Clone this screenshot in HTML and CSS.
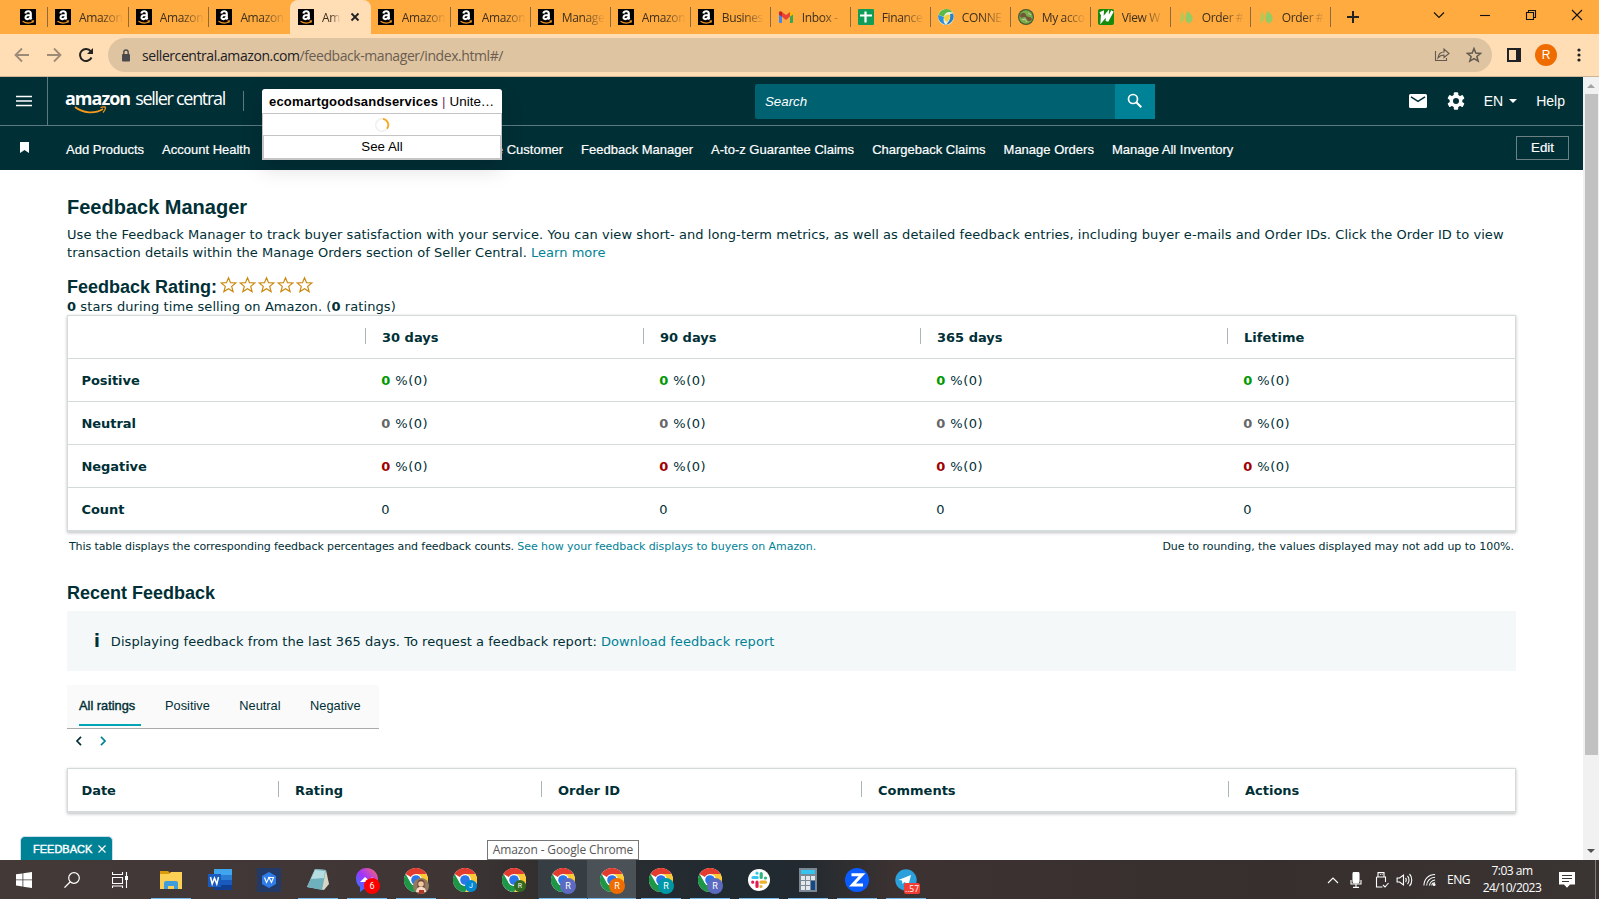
FILE: index.html
```
<!DOCTYPE html>
<html lang="en">
<head>
<meta charset="utf-8">
<title>Amazon</title>
<link rel="stylesheet" href="styles.css">
</head>
<body>
<svg width="0" height="0" class="defs">
  <defs>
    <symbol id="amz" viewBox="0 0 16 16"><rect width="16" height="16" fill="#000"/><path d="M5.300 4.600C5.700 2.900 7 2.300 8.300 2.300c1.700 0 2.500.9 2.500 2.500v4c0 .6.300 1 .7 1.500M10.500 6c-3.300 0-5 .7-5 2.400 0 2.500 4 2.400 5-.6" fill="none" stroke="#fff" stroke-width="2.100"/><path d="M2.500 12.200c3.500 2.300 7.500 2.300 10.500.6M11.500 12l2-.1-.6 1.800" fill="none" stroke="#f7961d" stroke-width="1.100"/></symbol>
    <symbol id="leaf" viewBox="0 0 16 16"><path d="M3 2c5 4 4 9-.5 12.500C1.500 11 4 7 3 2z" fill="#b3c855"/><path d="M9.500 2c6 4 7 10 1.500 12.500-5-2-4-8-1.500-12.500z" fill="#93cb66"/></symbol>
    <symbol id="chrome" viewBox="0 0 24 24"><circle cx="12" cy="12" r="12" fill="#fff"/><path d="M12 12L1.600 6A12 12 0 0 1 22.400 6H12z" fill="#e33b2e"/><path d="M12 6h10.400A12 12 0 0 1 12 24l5.200-9z" fill="#fcc934"/><path d="M1.600 6l5.200 9L12 18l5.200-3L12 24A12 12 0 0 1 1.600 6z" fill="#1e9647"/><circle cx="12" cy="12" r="6" fill="#fff"/><circle cx="12" cy="12" r="4.800" fill="#2b76e8"/></symbol>
    <symbol id="star" viewBox="0 0 19 18"><path d="M8.500 1.800l2 4.900 5.300.3-4.100 3.400 1.400 5.200-4.600-2.900-4.600 2.900 1.400-5.200L1.200 7l5.300-.3z" fill="#fff" stroke="#cc8a12" stroke-width="1.200"/></symbol>
  </defs>
</svg>

<div class="tabstrip">
  <div class="tab pinned"><svg class="fav"><use href="#amz"/></svg></div>
  <div class="tab wide"><svg class="fav"><use href="#amz"/></svg><span>Amazon</span></div>
  <div class="tab wide"><svg class="fav"><use href="#amz"/></svg><span>Amazon</span></div>
  <div class="tab wide last"><svg class="fav"><use href="#amz"/></svg><span>Amazon</span></div>
  <div class="tab active"><svg class="fav"><use href="#amz"/></svg><span>Am</span><svg class="close" viewBox="0 0 10 10"><path d="M1.500 1.500l7 7m0-7l-7 7" stroke="#222" stroke-width="1.800"/></svg></div>
  <div class="tab"><svg class="fav"><use href="#amz"/></svg><span>Amazon</span></div>
  <div class="tab"><svg class="fav"><use href="#amz"/></svg><span>Amazon</span></div>
  <div class="tab"><svg class="fav"><use href="#amz"/></svg><span>Manage</span></div>
  <div class="tab"><svg class="fav"><use href="#amz"/></svg><span>Amazon</span></div>
  <div class="tab"><svg class="fav"><use href="#amz"/></svg><span>Busines</span></div>
  <div class="tab"><svg class="fav" viewBox="0 0 16 16"><path d="M1 4l3 2v8H2a1 1 0 0 1-1-1z" fill="#4285f4"/><path d="M12 6l3-2v9a1 1 0 0 1-1 1h-2z" fill="#34a853"/><path d="M4 6V3l4 3 4-3v4.500L8 11 4 7.800z" fill="#ea4335"/><path d="M1 4c0-2 2-2 3-1v4.800L1 5.500z" fill="#c5221f"/><path d="M15 4c0-2-2-2-3-1v4.800l3-2.300z" fill="#fbbc04"/></svg><span>Inbox -</span></div>
  <div class="tab"><svg class="fav" viewBox="0 0 16 16"><rect width="16" height="16" rx="1" fill="#0f9d58"/><path d="M2 6.500h12M7.500 2.500v11" stroke="#fff" stroke-width="2.200"/></svg><span>Finance</span></div>
  <div class="tab"><svg class="fav" viewBox="0 0 16 16"><circle cx="8" cy="8" r="8" fill="#e9f0d8"/><path d="M.5 6a7.800 7.800 0 0 1 14-2.500c-4-1.500-8 0-8.500 4z" fill="#5cb947"/><path d="M.3 6c-1 5 3 9 7.700 10-2.500-2-3-5-2-8z" fill="#2d8fd5"/><path d="M15 4.500c2 5-1 10-7 11.500 3-4 5-6 4-11z" fill="#2a7fca"/><path d="M6 8c2-3 5-3 6-2 0 3-1 5-3 7-2-1-3-3-3-5z" fill="#f6cf37"/></svg><span>CONNE</span></div>
  <div class="tab"><svg class="fav" viewBox="0 0 16 16"><circle cx="8" cy="8" r="8" fill="#465832"/><circle cx="8" cy="8" r="6.800" fill="#79ad48"/><path d="M2 7c1-4 5-4 6-1s5 1 6 4c-2 4-5 2-6-1s-5 2-6-2z" fill="#72553d"/><path d="M4 11l3-1 2 3M10 4l3 2" fill="none" stroke="#d1c5a6"/></svg><span>My acco</span></div>
  <div class="tab"><svg class="fav" viewBox="0 0 16 16"><rect width="16" height="16" rx="2" fill="#178a0c"/><path d="M2 4.500l2.500-1L4 11l5.500-6.500L9 12l5.500-10" fill="none" stroke="#fff" stroke-width="2.800"/></svg><span>View W</span></div>
  <div class="tab"><svg class="fav"><use href="#leaf"/></svg><span>Order #</span></div>
  <div class="tab"><svg class="fav"><use href="#leaf"/></svg><span>Order #</span></div>
  <svg class="plus" viewBox="0 0 12 12"><path d="M6 0v12M0 6h12" stroke="#222" stroke-width="2"/></svg>
  <div class="winbtns">
    <svg viewBox="0 0 12 12"><path d="M1 3.500l5 5 5-5" /></svg>
    <svg viewBox="0 0 12 12"><path d="M1 6.500h10"/></svg>
    <svg viewBox="0 0 12 12"><path d="M1.500 3.500h7v7h-7zM3.500 3.500v-2h7v7h-2"/></svg>
    <svg viewBox="0 0 12 12"><path d="M1 1l10 10M11 1L1 11"/></svg>
  </div>
</div>

<div class="toolbar">
  <svg class="nav" viewBox="0 0 16 16"><path d="M15 8H2M8 1.500L1.500 8 8 14.500" stroke="#9d8b77"/></svg>
  <svg class="nav" viewBox="0 0 16 16"><path d="M1 8h13M8 1.500L14.500 8 8 14.500" stroke="#9d8b77"/></svg>
  <svg class="nav" viewBox="0 0 16 16"><path d="M13.500 10.500A6 6 0 1 1 12.800 4.400L14 6" stroke="#222" stroke-width="2"/><path d="M15 1v6H9z" fill="#222" stroke="none"/></svg>
  <div class="omnibox">
    <svg class="lock" viewBox="0 0 10 13"><rect x="1" y="5" width="8" height="7.500" rx="1" fill="#4a4a4c"/><path d="M2.800 5.500V3.200a2.200 2.200 0 0 1 4.400 0v2.300" fill="none" stroke="#4a4a4c" stroke-width="1.400"/></svg>
    <span class="url">sellercentral.amazon.com<i>/feedback-manager/index.html#/</i></span>
    <svg class="obic" viewBox="0 0 16 16"><path d="M1.500 4v9.500h11V11M4 11c.5-4 3-6 6-6V2l5 4.500-5 4V8c-2.500 0-4.500 1-6 3z"/></svg>
    <svg class="obic star" viewBox="0 0 16 16"><path d="M8 1.500l1.800 4.600 4.900.3-3.800 3.100 1.300 4.700L8 11.600l-4.200 2.600 1.300-4.700L1.300 6.400l4.900-.3z" stroke-width="1.500"/></svg>
  </div>
  <svg class="side" viewBox="0 0 14 14"><path d="M1 1h12v12H1z" fill="none" stroke="#202124" stroke-width="2"/><path d="M9 1h4v12H9z" fill="#202124"/></svg>
  <div class="avatar">R</div>
  <svg class="dots" viewBox="0 0 4 14"><circle cx="2" cy="2" r="1.600"/><circle cx="2" cy="7" r="1.600"/><circle cx="2" cy="12" r="1.600"/></svg>
</div>

<div class="viewport">
  <div class="page">
    <header class="top">
      <div class="burger"><svg viewBox="0 0 16 12"><path d="M0 1.500h16M0 6h16M0 10.500h16" stroke="#fff" stroke-width="1.700"/></svg></div>
      <div class="logo"><b>amazon</b><span>seller central</span>
        <svg viewBox="0 0 34 8"><path d="M1 1c8 6.500 20 7 28 2" fill="none" stroke="#f79a1c" stroke-width="1.700"/><path d="M26.500 1.500c3-1 5-.5 5 0 0 1.500-1 3.500-2.500 5" fill="none" stroke="#f79a1c" stroke-width="1.200"/></svg>
      </div>
      <div class="sep"></div>
      <div class="account">
        <div class="acc-sel"><b>ecomartgoodsandservices</b><em>|</em>Unite…</div>
        <div class="menu">
          <div class="spin"><svg viewBox="0 0 16 16"><circle cx="8" cy="8" r="6.300" fill="none" stroke="#f1f1f1" stroke-width="1.700"/><path d="M9 1.800a6.300 6.300 0 0 1 4 10" fill="none" stroke="#f9a81c" stroke-width="1.800"/></svg></div>
          <div class="seeall">See All</div>
        </div>
      </div>
      <div class="search"><span>Search</span><div class="go"><svg viewBox="0 0 16 16"><circle cx="6" cy="6" r="4.500" fill="none" stroke="#fff" stroke-width="1.700"/><path d="M9.300 9.300l5 5" stroke="#fff" stroke-width="2"/></svg></div></div>
      <div class="tools">
        <svg class="mail" viewBox="0 0 18 14"><rect width="18" height="14" rx="1.500" fill="#fff"/><path d="M2 2.800l7 4.600 7-4.600" fill="none" stroke="#002f36" stroke-width="1.500"/></svg>
        <svg class="gear" viewBox="0 0 18 18"><g fill="#fff"><circle cx="9" cy="9" r="6.400"/><rect x="6.800" y=".3" width="4.400" height="17.400" rx="1"/><rect x="6.800" y=".3" width="4.400" height="17.400" rx="1" transform="rotate(60 9 9)"/><rect x="6.800" y=".3" width="4.400" height="17.400" rx="1" transform="rotate(120 9 9)"/></g><circle cx="9" cy="9" r="3" fill="#002f36"/></svg>
        <span class="lang">EN</span><i class="caret"></i><span>Help</span>
      </div>
    </header>
    <nav class="fav-nav">
      <svg class="bm" viewBox="0 0 9 11"><path d="M0 0h9v11L4.500 8 0 11z" fill="#fff"/></svg>
      <a class="n1">Add Products</a><a class="n2">Account Health</a><a class="n3">e Customer</a><a>Feedback Manager</a><a>A-to-z Guarantee Claims</a><a>Chargeback Claims</a><a>Manage Orders</a><a>Manage All Inventory</a>
      <button class="edit">Edit</button>
    </nav>
    <main>
      <h1>Feedback Manager</h1>
      <p class="intro"><span>Use the Feedback Manager to track buyer satisfaction with your service. You can view short- and long-term metrics, as well as detailed feedback entries, including buyer e-mails and Order IDs. Click the Order ID to view</span><br>transaction details within the Manage Orders section of Seller Central. <a>Learn more</a></p>
      <h2 class="rating">Feedback Rating:<svg><use href="#star"/></svg><svg><use href="#star"/></svg><svg><use href="#star"/></svg><svg><use href="#star"/></svg><svg><use href="#star"/></svg></h2>
      <p class="stars-note"><b>0</b> stars during time selling on Amazon. (<b>0</b> ratings)</p>
      <div class="grid stats">
        <div class="row head"><div></div><div>30 days</div><div>90 days</div><div>365 days</div><div>Lifetime</div></div>
        <div class="row pos"><div>Positive</div><div><b>0</b> %(0)</div><div><b>0</b> %(0)</div><div><b>0</b> %(0)</div><div><b>0</b> %(0)</div></div>
        <div class="row neu"><div>Neutral</div><div><b>0</b> %(0)</div><div><b>0</b> %(0)</div><div><b>0</b> %(0)</div><div><b>0</b> %(0)</div></div>
        <div class="row neg"><div>Negative</div><div><b>0</b> %(0)</div><div><b>0</b> %(0)</div><div><b>0</b> %(0)</div><div><b>0</b> %(0)</div></div>
        <div class="row"><div>Count</div><div>0</div><div>0</div><div>0</div><div>0</div></div>
      </div>
      <div class="foot"><span class="left">This table displays the corresponding feedback percentages and feedback counts. <a>See how your feedback displays to buyers on Amazon.</a></span><span>Due to rounding, the values displayed may not add up to 100%.</span></div>
      <h2 class="recent">Recent Feedback</h2>
      <div class="info"><b>i</b><span>Displaying feedback from the last 365 days. To request a feedback report: <a>Download feedback report</a></span></div>
      <div class="filters"><div class="on">All ratings</div><div>Positive</div><div>Neutral</div><div>Negative</div></div>
      <div class="pager"><svg viewBox="0 0 8 10"><path d="M6 .8L2 5l4 4.200" stroke="#002f36"/></svg><svg viewBox="0 0 8 10"><path d="M2 .8L6 5 2 9.200" stroke="#008296"/></svg></div>
      <div class="grid list"><div class="row head"><div>Date</div><div>Rating</div><div>Order ID</div><div>Comments</div><div>Actions</div></div></div>
    </main>
  </div>
  <div class="scroll"><i class="up"></i><div class="thumb"></div><i class="down"></i></div>
  <div class="fb">FEEDBACK<svg viewBox="0 0 8 8"><path d="M.5.5l7 7m0-7l-7 7" stroke="#fff" stroke-width="1.200"/></svg></div>
  <div class="tip">Amazon - Google Chrome</div>
</div>

<footer class="taskbar">
  <div class="ti"><svg viewBox="0 0 16 16" class="s16"><path d="M0 2.300l6.500-.9v6.100H0zM7.300 1.300L16 0v7.500H7.300zM0 8.300h6.500v6.200L0 13.600zM7.300 8.300H16V16l-8.700-1.300z" fill="#fff"/></svg></div>
  <div class="ti"><svg viewBox="0 0 16 16" class="s16"><circle cx="10" cy="6" r="5.300" fill="none" stroke="#fff" stroke-width="1.200"/><path d="M6.300 9.800L.5 15.600" stroke="#fff" stroke-width="1.300"/></svg></div>
  <div class="ti"><svg viewBox="0 0 16 16" class="s16"><path d="M.5 0v2.500h10V0M.5 5.500h10v6H.5zM.5 16v-2h10v2M14.500 0v16" fill="none" stroke="#fff" stroke-width="1.100"/><rect x="13" y="4" width="3" height="4" fill="#fff"/></svg></div>
  <div class="ti open"><svg viewBox="0 0 24 24"><path d="M1 3h8l2 2v2H1z" fill="#d99a0b"/><path d="M1 6h9l2-2h11v17H1z" fill="#fccf55"/><path d="M5 21v-6a2 2 0 0 1 2-2h10a2 2 0 0 1 2 2v6h-4v-3H9v3z" fill="#3f9ddb"/></svg></div>
  <div class="ti"><svg viewBox="0 0 24 24"><path d="M6 1h18v6H6z" fill="#41a5ee"/><path d="M6 7h18v5H6z" fill="#2b7cd3"/><path d="M6 12h18v5H6z" fill="#185abd"/><path d="M6 17h18v5H6z" fill="#103f91"/><rect y="6" width="13" height="13" fill="#185abd"/><path d="M2.500 9l1.700 7 2.300-6 2.300 6 1.700-7" fill="none" stroke="#fff" stroke-width="1.500"/></svg></div>
  <div class="ti"><svg viewBox="0 0 24 24"><rect width="24" height="24" fill="#243a66"/><path d="M12 4l7 4v8l-7 4-7-4V8z" fill="#2f7de8"/><path d="M7.500 9.500l2 5 2.500-5 2.500 5 2-5H11" fill="none" stroke="#fff" stroke-width="1.100"/></svg></div>
  <div class="ti open"><svg viewBox="0 0 24 24"><path d="M9 1l11 1 3 14-5 6L1 19z" fill="#d8d5c6"/><path d="M9 1l11 1-4 20L1 19z" fill="#6fb0bd"/><path d="M9 2l10 1-1 7L5 11z" fill="#b5dde2"/></svg></div>
  <div class="ti open"><svg viewBox="0 0 24 24"><defs><linearGradient id="ms" x1="0" y1="1" x2="1" y2="0"><stop offset="0" stop-color="#1787ff"/><stop offset=".5" stop-color="#a033ff"/><stop offset="1" stop-color="#ff6968"/></linearGradient></defs><path d="M12 0C5 0 1 5 1 10.500c0 4 1.500 6.500 4 8.500v5l4-3c8 2 14-4 14-10S18 0 12 0z" fill="url(#ms)"/><path d="M5 14l5-5 3 2.500L18 9l-4 5" fill="#fff"/></svg><em class="bdg red">6</em></div>
  <div class="ti open"><svg><use href="#chrome"/></svg><em class="bdg photo"><svg viewBox="0 0 16 16"><circle cx="8" cy="8" r="8" fill="#927a60"/><path d="M4.500 13V5c1-5 7-4 7 0v8z" fill="#6b4330"/><circle cx="8" cy="6" r="2.800" fill="#f1c6a2"/><path d="M3 14c0-7 10-7 10 0z" fill="#f4d9c7"/><path d="M6 16v-4h5v3z" fill="#b7342b"/></svg></em></div>
  <div class="ti"><svg><use href="#chrome"/></svg><em class="bdg sm blue">J</em></div>
  <div class="ti"><svg><use href="#chrome"/></svg><em class="bdg sm green">R</em></div>
  <div class="ti open hov"><svg><use href="#chrome"/></svg><em class="bdg ind">R</em></div>
  <div class="ti open cur"><svg><use href="#chrome"/></svg><em class="bdg org">R</em></div>
  <div class="ti open"><svg><use href="#chrome"/></svg><em class="bdg teal">R</em></div>
  <div class="ti open"><svg><use href="#chrome"/></svg><em class="bdg ind">R</em></div>
  <div class="ti open"><svg viewBox="0 0 24 24"><circle cx="12" cy="12" r="11" fill="#fff"/><g fill="none" stroke-width="3.200" stroke-linecap="round"><path d="M10 5.200v.01M6 9.500h4.200" stroke="#36c5f0"/><path d="M14.200 5.500v4M18.500 10v.01" stroke="#2eb67d"/><path d="M14 14.200h4.500M14 18.500v.01" stroke="#ecb22e"/><path d="M10 14.200v4.300M5.700 14.200v.01" stroke="#e01e5a"/></g></svg></div>
  <div class="ti open"><svg viewBox="0 0 24 24"><rect x="3" width="18" height="24" fill="#7a8895"/><rect x="5" y="2" width="14" height="4" fill="#35c4ee"/><path d="M5 8h4v4H5zM10 8h4v4h-4zM15 8h4v4h-4zM5 13h4v4H5zM10 13h4v4h-4zM5 18h4v4H5zM10 18h4v4h-4z" fill="#e4e8eb"/><path d="M15 13h4v9h-4z" fill="#114a8b"/></svg></div>
  <div class="ti open"><svg viewBox="0 0 24 24"><circle cx="12" cy="12" r="12" fill="#0b5cff"/><path d="M6.500 6.800h10.500L7.500 17H18" fill="none" stroke="#fff" stroke-width="3"/></svg></div>
  <div class="ti open"><svg viewBox="0 0 24 24"><circle cx="12" cy="12" r="10.700" fill="#2ba0da"/><path d="M4.500 12L17 7l-2.500 10-4-3-2 2-.5-3.500z" fill="#fff"/></svg><em class="count">..57</em></div>
  <div class="tray">
    <svg class="t1" viewBox="0 0 12 12"><path d="M1 9l5-5 5 5"/></svg>
    <svg class="t2" viewBox="0 0 12 16"><rect x="3" y="0" width="6" height="11" rx="2" fill="#fff"/><path d="M1 8v4h10V8M6 12v3M3 15.400h6"/></svg>
    <svg class="t3" viewBox="0 0 14 16"><path d="M3 5V.6h6V5M1.500 5h9v5M1.500 5v10h6M8 13l2 2 3.500-4M5 2.500h.8M6.800 2.500h.8"/></svg>
    <svg class="t4" viewBox="0 0 16 14"><path d="M.6 5v4h2.500L7 12V2L3.100 5zM9 5c1 1 1 3 0 4M11 3c2 2 2 6 0 8M13 1c3 3 3 9 0 12"/></svg>
    <svg class="t5" viewBox="0 0 14 14"><path d="M1 13C1 6 6 1 13 1M4 13c0-5 4-9 9-9M7 13c0-3 3-6 6-6M9.500 13c0-2 1.500-3 3.500-3"/><circle cx="12" cy="12" r="1.500" fill="#fff" stroke="none"/></svg>
    <span class="eng">ENG</span>
    <div class="clock"><span>7:03 am</span><span>24/10/2023</span></div>
    <svg class="t6" viewBox="0 0 16 16"><path d="M0 0h16v12.500h-5L8 15.800l-3-3.300H0z" fill="#fff" stroke="none"/><path d="M3 3.500h10M3 6.500h10M3 9.500h7" stroke="#3b3534"/></svg>
    <div class="peek"></div>
  </div>
</footer>
</body>
</html>
```
FILE: styles.css
```
* { box-sizing: border-box; }
body { margin: 0; width: 1599px; height: 899px; overflow: hidden; background: #fff; font-family: "Liberation Sans", Arial, sans-serif; color: #002f36; display: flex; flex-direction: column; }
.defs { position: absolute; }
svg { display: block; flex: none; }
p, h1, h2 { margin: 0; }

/* browser chrome */
.tabstrip { height: 34px; flex: none; background: #ffab40; display: flex; align-items: center; font: 12px "Open Sans", sans-serif; color: #3d2f1c; }
.tab { width: 80px; height: 34px; padding-left: 7px; display: flex; align-items: center; flex: none; gap: 8px; background: linear-gradient(#8d6a3c, #8d6a3c) right 7px / 1px 20px no-repeat; }
.tab.pinned { width: 48px; padding-left: 20px; }
.tab.wide { width: 80.7px; }
.tab.last { background: none; }
.tab span { min-width: 41px; white-space: nowrap; letter-spacing: -.35px; -webkit-mask-image: linear-gradient(90deg, #000 50%, rgba(0,0,0,.05)); }
.tab.active { width: 80.7px; background: #ffddb5; border-radius: 8px 8px 0 0; padding-left: 8px; }
.tab.active span { min-width: 18px; }
.fav { width: 16px; height: 16px; }
.close { width: 10px; height: 10px; margin-left: 2px; }
.plus { width: 12px; height: 12px; margin-left: 16px; }
.winbtns { margin-left: auto; padding: 0 16px 5px 0; display: flex; gap: 34px; }
.winbtns svg { width: 12px; height: 12px; fill: none; stroke: #111; stroke-width: 1.1; }
.toolbar { height: 43px; flex: none; background: #ffddb5; border-bottom: 1px solid #cdb496; display: flex; align-items: center; padding-left: 14px; }
.nav { width: 16px; height: 16px; margin-right: 16px; fill: none; stroke-width: 1.8; }
.omnibox { width: 1384px; height: 34px; margin-left: -2px; border-radius: 17px; background: #dfc4a2; display: flex; align-items: center; padding-left: 13px; }
.lock { width: 10px; height: 13px; }
.url { font: 14px "Open Sans", sans-serif; color: #202124; margin: 0 auto 0 11px; white-space: nowrap; letter-spacing: -.43px; }
.url i { font-style: normal; color: #6a5e50; }
.obic { width: 16px; height: 16px; margin-right: 16px; fill: none; stroke: #625a50; stroke-width: 1.1; }
.obic.star { margin-right: 10px; }
.side { width: 14px; height: 14px; margin-left: 15px; }
.avatar { width: 22px; height: 22px; border-radius: 50%; background: #ef6c00; color: #fff; font-size: 12px; line-height: 22px; text-align: center; margin-left: 14px; }
.dots { width: 4px; height: 14px; margin-left: 20px; fill: #202124; }

/* page */
.viewport { height: 783px; flex: none; display: flex; position: relative; }
.page { width: 1583px; }
.top { height: 49px; background: #002f36; border-bottom: 1px solid #5c7a7e; display: flex; align-items: center; position: relative; color: #fff; }
.burger { width: 48px; height: 49px; border-right: 1px solid #5c7a7e; display: flex; align-items: center; padding-left: 16px; }
.burger svg { width: 16px; height: 12px; }
.logo { width: 160px; margin-left: 17px; position: relative; font: 18px "Open Sans", sans-serif; white-space: nowrap; line-height: 24px; padding-bottom: 6px; display: flex; gap: 5px; letter-spacing: -1.3px; }
.logo b { letter-spacing: -1px; }
.logo svg { position: absolute; left: 9px; top: 20px; width: 34px; height: 8px; }
.sep { width: 1px; height: 20px; background: #5c7a7e; margin: 0 0 1px 18px; }
.account { position: absolute; left: 262px; top: 12px; width: 240px; color: #000; font-size: 13.3px; z-index: 3; box-shadow: 0 8px 20px rgba(0,0,0,.15); }
.acc-sel { height: 24px; background: #fff; border-radius: 3px 3px 0 0; line-height: 25px; padding-left: 7px; white-space: nowrap; font-size: 13.4px; }
.acc-sel b { font-size: 13px; letter-spacing: .19px; }
.acc-sel em { font-style: normal; margin: 0 4px; color: #7d2a6c; }
.menu { background: #fff; border: 1px solid #c4c4c4; }
.spin { height: 21px; display: flex; align-items: center; justify-content: center; }
.spin svg { width: 16px; height: 16px; }
.seeall { height: 24px; border: 1px solid #c4c4c4; text-align: center; line-height: 22px; }
.search { width: 400px; height: 35px; margin: 0 0 0 511px; background: #006170; display: flex; align-items: center; padding-left: 10px; font-size: 13.3px; font-style: italic; border-radius: 2px; }
.go { width: 40px; height: 35px; margin-left: auto; background: #008296; display: flex; align-items: center; justify-content: center; }
.go svg { width: 16px; height: 16px; }
.tools { margin-left: auto; display: flex; align-items: center; font-size: 14px; padding-right: 18px; }
.mail { width: 18px; height: 14px; margin-right: 20px; }
.gear { width: 18px; height: 18px; margin-right: 19px; }
.caret { border: 4px solid transparent; border-top-color: #fff; border-bottom: 0; margin: 0 19px 0 6px; }
.fav-nav { height: 44px; background: #002f36; display: flex; align-items: center; color: #fff; font-size: 13px; white-space: nowrap; -webkit-text-stroke: .2px #fff; position: relative; }
.fav-nav a { margin-right: 18px; padding-top: 2px; }
.bm { width: 9px; height: 11px; margin: 0 37px 1px 20px; }
.fav-nav .n2 { margin-right: 0; width: 250px; }
.fav-nav .n3 { width: 68px; margin-left: 83px; display: flex; justify-content: flex-end; }
.edit { margin: 0 14px 1px auto; width: 53px; height: 24px; padding: 0 0 1px; background: none; border: 1px solid #6b8184; color: #fff; font: 13.3px "Liberation Sans", Arial, sans-serif; line-height: 21px; }

main { padding: 24px 67px 0; font: 13px/18px "DejaVu Sans", Verdana, sans-serif; letter-spacing: .03px; }
main a { color: #008296; }
h1, h2 { font-family: "Liberation Sans", Arial, sans-serif; white-space: nowrap; letter-spacing: 0; }
h1 { font-size: 20px; line-height: 26px; }
.intro { margin-top: 6px; white-space: nowrap; }
.intro span { letter-spacing: .062px; }
.rating { font-size: 18px; line-height: 22px; margin-top: 14px; display: flex; }
.rating svg { width: 19px; height: 18px; }
.rating svg:first-of-type { margin-left: 3px; }
.stars-note { line-height: 18px; margin-bottom: -1px; letter-spacing: .08px; }
.grid { width: 1449px; border: 1px solid #d5dbdb; border-bottom-width: 2px; box-shadow: 0 1px 3px rgba(0,0,0,.25); }
.row { display: grid; grid-template-columns: 297px 278px 277px 307px 1fr; height: 43px; align-items: center; }
.row + .row { border-top: 1px solid #d5dbdb; }
.row > div { padding: 2px 0 0 16.3px; letter-spacing: .55px; }
.row > div b { letter-spacing: .2px; }
.row > div:first-child { padding-left: 13.5px; font-weight: bold; letter-spacing: -.06px; }
.row.head { font-weight: bold; }
.head > div + div { background: linear-gradient(#aab7b8, #aab7b8) left 1px / 1px 16px no-repeat; padding-left: 17px; letter-spacing: 0; }
.stats .head { height: 42px; }
.pos b { color: #090; } .neu b { color: #666; } .neg b { color: #a00000; }
.foot { display: flex; justify-content: space-between; font-size: 11px; line-height: 16px; margin: 7px 2px 0; letter-spacing: -.03px; }
.foot .left { letter-spacing: -.11px; }
.foot .left a { letter-spacing: -.05px; }
.recent { font-size: 18px; line-height: 22px; margin-top: 27px; }
.info { width: 1449px; height: 60px; background: #f4f8f9; margin-top: 7px; display: flex; align-items: center; padding-left: 27px; gap: 11px; }
.info b { font-size: 17px; margin-top: -1px; }
.info span { letter-spacing: .045px; padding-top: 1px; }
.filters { display: flex; width: 312px; height: 44px; background: #fafafa; border-bottom: 1px solid #aaa; margin-top: 14px; padding-left: 12px; font: 12.8px/36px "Liberation Sans", Arial, sans-serif; letter-spacing: 0; }
.filters div { flex: none; margin-right: 29.5px; height: 41px; padding-top: 3px; white-space: nowrap; }
.filters .on { border-bottom: 2px solid #00a4b4; width: 62px; margin-right: 24px; -webkit-text-stroke: .4px; letter-spacing: 0; }
.pager { display: flex; gap: 16px; padding: 7px 0 0 8px; height: 39px; }
.pager svg { width: 8px; height: 10px; fill: none; stroke-width: 1.7; }
.list .row { grid-template-columns: 210px 263px 320px 367px 1fr; height: 42px; }

.scroll { width: 16px; background: #f1f1f1; display: flex; flex-direction: column; align-items: center; }
.thumb { width: 13px; height: 661px; background: #c1c1c1; }
.up, .down { border: 4px solid transparent; }
.up { border-bottom-color: #a3a3a3; border-top: 0; margin: 7px 0 6px; }
.down { border-top-color: #505050; border-bottom: 0; margin: auto 0 7px; }
.fb { position: absolute; left: 20px; bottom: 0; width: 93px; height: 24px; background: #008296; border: 1px solid #cde; border-bottom: 0; border-radius: 5px 5px 0 0; color: #fff; font-size: 11px; display: flex; align-items: center; padding-left: 12px; gap: 6px; -webkit-text-stroke: .4px; }
.fb svg { width: 8px; height: 8px; }
.tip { position: absolute; left: 487px; bottom: 0; width: 152px; height: 20px; border: 1px solid #767676; background: #fff; color: #575757; font: 12px/18px "Open Sans", sans-serif; text-align: center; white-space: nowrap; letter-spacing: -.13px; }

/* taskbar */
.taskbar { height: 39px; flex: none; display: flex; background: linear-gradient(90deg, #433a38, #3f3535 28%, #33302f 33%, #202a31 45%, #222a30 50%, #3c3231 56%, #362f2e 80%, #3a3433); color: #fff; }
.ti { width: 49px; height: 39px; flex: none; display: flex; align-items: center; justify-content: center; position: relative; background: linear-gradient(#76b9ed, #76b9ed) center bottom / 0 1px no-repeat; }
.ti:nth-child(-n+3) { width: 48px; }
.ti:nth-child(4) { margin-left: 2px; }
.ti.open { background-size: 40px 1px; }
.ti.hov { background-color: #363e44; background-size: 48px 1px; }
.ti.cur { background-color: #4a5157; background-size: 48px 1px; }
.ti > svg { width: 24px; height: 24px; }
.ti > svg.s16 { width: 16px; height: 16px; }
.bdg { position: absolute; left: 22px; top: 18px; width: 16px; height: 16px; border-radius: 50%; font: 9px/16px Roboto, sans-serif; text-align: center; }
.bdg svg { width: 16px; height: 16px; }
.sm { width: 12px; height: 12px; line-height: 12px; left: 25px; top: 20px; font-size: 7px; }
.red { background: #f00; } .blue { background: #0288d1; } .green { background: #33691e; } .ind { background: #5c6bc0; } .org { background: #ef6c00; } .teal { background: #0097a7; }
.count { position: absolute; left: 23px; top: 23px; width: 16px; height: 11px; border-radius: 2px; background: #f23c34; font: 8.5px/11px "Open Sans", sans-serif; text-align: center; }
.tray { margin-left: auto; display: flex; align-items: center; font: 12px "Open Sans", sans-serif; height: 39px; }
.tray svg { fill: none; stroke: #fff; stroke-width: 1.1; }
.t1 { width: 12px; height: 12px; margin-right: 11px; }
.t2 { width: 12px; height: 16px; margin-right: 13px; }
.t3 { width: 14px; height: 16px; margin-right: 7px; }
.t4 { width: 17px; height: 14px; margin-right: 10px; }
.t5 { width: 13px; height: 14px; margin-right: 11px; }
.eng { letter-spacing: -.5px; width: 24px; }
.clock { width: 62px; margin: 0 16px 0 10px; display: flex; flex-direction: column; align-items: center; line-height: 17px; letter-spacing: -.5px; padding-bottom: 1px; }
.tray .t6 { width: 16px; height: 16px; margin-right: 20px; }
.peek { width: 4px; height: 39px; border-left: 1px solid #807b7a; }
```
